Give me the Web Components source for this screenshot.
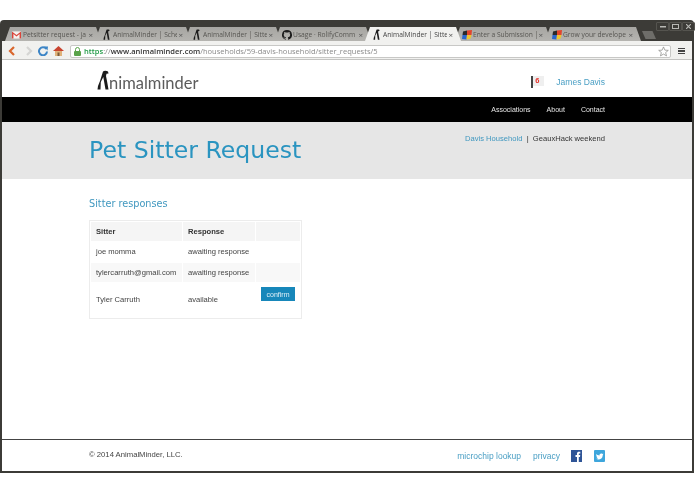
<!DOCTYPE html>
<html>
<head>
<meta charset="utf-8">
<title>AnimalMinder | Sitter request</title>
<style>
  html, body { margin: 0; padding: 0; background: #fff; }
  body { width: 695px; height: 494px; overflow: hidden; font-family: "Liberation Sans", Arial, sans-serif; }
</style>
</head>
<body>
<browser-window>
  <browser-tab slot="tabs" icon="gmail">Petsitter request - ja</browser-tab>
  <browser-tab slot="tabs" icon="am">AnimalMinder | Sche</browser-tab>
  <browser-tab slot="tabs" icon="am">AnimalMinder | Sitte</browser-tab>
  <browser-tab slot="tabs" icon="github">Usage · RolifyComm</browser-tab>
  <browser-tab slot="tabs" icon="am" active>AnimalMinder | Sitte</browser-tab>
  <browser-tab slot="tabs" icon="devpost">Enter a Submission |</browser-tab>
  <browser-tab slot="tabs" icon="devpost">Grow your develope</browser-tab>
  <am-header></am-header>
  <am-nav></am-nav>
  <am-hero></am-hero>
  <am-responses></am-responses>
  <am-footer></am-footer>
</browser-window>

<script>
  const MARK_PATH = 'M6 1.500 C7 .5 9.500 .5 11 1.500 L11.500 3.500 L9.500 3.800 L9 6 L10 11 L11.500 19.500 L8.500 19.500 L7 11 L6.300 7 L3.800 12 L3.500 19.500 L.5 19.500 L1 16 L3 11 Z';
  const MARK = `<svg viewBox="0 0 12 20" width="100%" height="100%"><path d="${MARK_PATH}" fill="#1c1c1c"/></svg>`;

  const TAB_ICONS = {
    gmail: `<svg width="9" height="8" viewBox="0 0 10 8"><rect width="10" height="8" fill="#f5f2ee"/><path d="M0 0 L5 4 L10 0 V8 H8.400 V3 L5 5.600 L1.600 3 V8 H0 Z" fill="#d9443a"/></svg>`,
    am: `<svg width="7" height="11" viewBox="0 0 12 20"><path d="${MARK_PATH}" fill="#1c1c1c"/></svg>`,
    github: `<svg width="10" height="10" viewBox="0 0 16 16"><path d="M8 0a8 8 0 0 0-2.500 15.600c.4.100.5-.2.5-.4v-1.400c-2.200.5-2.700-1-2.700-1-.4-.9-.9-1.200-.9-1.200-.7-.5 0-.5 0-.5.8.100 1.200.8 1.200.8.700 1.200 1.900.9 2.300.7.100-.5.300-.9.500-1.100-1.800-.2-3.600-.9-3.600-4 0-.9.300-1.600.800-2.100-.100-.2-.4-1 .100-2.100 0 0 .7-.2 2.200.8a7.600 7.600 0 0 1 4 0c1.500-1 2.200-.8 2.200-.8.400 1.100.200 1.900.100 2.100.5.500.8 1.200.8 2.100 0 3.100-1.900 3.800-3.700 4 .3.300.6.800.6 1.500v2.200c0 .2.100.5.600.4A8 8 0 0 0 8 0z" fill="#1c1c1c"/></svg>`,
    devpost: `<svg width="10" height="10" viewBox="0 0 10 10"><path d="M5 .5 L10 0 L9.500 5 L5 5 Z" fill="#e2452d"/><path d="M1 1.500 L5 .5 L5 5 L.5 5 Z" fill="#2a2a2a"/><path d="M.5 5 L5 5 L4.500 9.500 L0 9 Z" fill="#2a66cc"/><path d="M5 5 L9.500 5 L8.500 8.500 L4.500 9.500 Z" fill="#f0c52c"/></svg>`
  };

  class BrowserTab extends HTMLElement {
    constructor() {
      super();
      this.attachShadow({ mode: 'open' });
      const icon = TAB_ICONS[this.getAttribute('icon')] || '';
      this.shadowRoot.innerHTML = `
        <style>
          :host {
            display: flex;
            align-items: center;
            box-sizing: border-box;
            width: 96px;
            height: 14px;
            margin-right: -6px;
            padding: 1px 8px 0 6px;
            background: linear-gradient(#a7a6a2, #b5b4b0);
            clip-path: polygon(0 100%, 5px 0, calc(100% - 5px) 0, 100% 100%);
            color: #565551;
            font: 6.700px "Open Sans", sans-serif;
          }
          :host([active]) {
            background: #f1f1ef;
            color: #444;
            z-index: 2;
          }
          .icon { flex: none; display: flex; width: 11px; justify-content: center; margin-right: 1px; }
          .title { flex: 1; min-width: 0; overflow: hidden; white-space: nowrap; }
          .x { flex: none; font-size: 8px; line-height: 10px; margin-left: 1px; color: #555; }
        </style>
        <span class="icon">${icon}</span>
        <span class="title"><slot></slot></span>
        <span class="x">×</span>
      `;
    }
  }

  class BrowserWindow extends HTMLElement {
    constructor() {
      super();
      this.attachShadow({ mode: 'open' });
      this.shadowRoot.innerHTML = `
        <style>
          :host { display: block; width: 694px; padding-top: 20px; filter: blur(.3px); }
          .frame {
            height: 453px;
            box-sizing: border-box;
            display: flex;
            flex-direction: column;
            background: #3c3b37;
            border-radius: 4px 4px 0 0;
            padding: 0 2px 2px 2px;
          }
          .strip { height: 21px; display: flex; align-items: flex-end; justify-content: space-between; padding-left: 3px; flex: none; }
          .tabs { display: flex; align-items: flex-end; }
          .newtab { width: 14px; height: 8px; margin: 0 0 2px 7px; background: #6e6d69; clip-path: polygon(0 0, 75% 0, 100% 100%, 25% 100%); }
          .controls { align-self: flex-start; display: flex; margin-top: 2px; }
          .controls span { width: 11px; height: 7px; border: 1px solid #55544f; border-radius: 1px; display: flex; align-items: center; justify-content: center; }
          .toolbar {
            flex: none;
            height: 19px;
            box-sizing: border-box;
            display: flex;
            align-items: center;
            background: #f1f1ef;
            padding: 2px 7px 0 6px;
            border-bottom: 1px solid #c4c4c2;
          }
          .nav { display: flex; align-items: center; margin-right: 6px; }
          .nav svg { display: block; margin-right: 7px; }
          .nav svg:last-child { margin-right: 0; }
          .omni {
            flex: 1;
            height: 13px;
            box-sizing: border-box;
            display: flex;
            align-items: center;
            background: #fff;
            border: 1px solid #c8c8c6;
            border-radius: 2px;
            font: 7.550px "Open Sans", sans-serif;
            color: #8a8a8a;
            padding: 0 1px 0 3px;
            white-space: nowrap;
          }
          .omni b { font-weight: 600; color: #333; }
          .omni i { font-style: normal; font-weight: 600; color: #1f9a45; }
          .lock { margin-right: 3px; display: flex; }
          .url { flex: 1; }
          .menu { margin-left: 7px; display: flex; flex-direction: column; gap: 1px; width: 7px; }
          .menu span { height: 1.500px; background: #444; }
          .page { flex: 1; min-height: 0; background: #fff; display: flex; flex-direction: column; }
        </style>
        <div class="frame">
          <div class="strip">
            <div class="tabs"><slot name="tabs"></slot><div class="newtab"></div></div>
            <div class="controls">
              <span><svg width="6" height="2"><rect width="6" height="1.500" fill="#b8b8b4"/></svg></span>
              <span><svg width="7" height="5"><rect x=".5" y=".5" width="6" height="4" fill="none" stroke="#b8b8b4"/></svg></span>
              <span><svg width="5" height="5"><path d="M0 0 L5 5 M5 0 L0 5" stroke="#b8b8b4" stroke-width="1.200"/></svg></span>
            </div>
          </div>
          <div class="toolbar">
            <div class="nav">
              <svg width="8" height="10" viewBox="0 0 8 10"><path d="M6 1 L2 5 L6 9" fill="none" stroke="#d9662c" stroke-width="2.200"/></svg>
              <svg width="8" height="10" viewBox="0 0 8 10" style="margin-right:5px;margin-left:2px"><path d="M2 1 L6 5 L2 9" fill="none" stroke="#d5d5d3" stroke-width="2.200"/></svg>
              <svg width="10" height="10" viewBox="0 0 10 10" style="margin-right:5px"><path d="M8.300 3 A4 4 0 1 0 9 5.500" fill="none" stroke="#3d85c6" stroke-width="2"/><path d="M6 .5 L10 .5 L9.500 4.500 Z" fill="#3d85c6"/></svg>
              <svg width="11" height="10" viewBox="0 0 11 10"><path d="M5.500 0 L11 5 H0 Z" fill="#c9442f"/><rect x="2" y="5" width="7" height="5" fill="#e0b27a"/><rect x="4.500" y="6.500" width="2" height="3.500" fill="#7a5a3a"/></svg>
            </div>
            <div class="omni">
              <span class="lock"><svg width="7" height="9" viewBox="0 0 7 9"><path d="M1.500 4 V2.500 A2 2 0 0 1 5.500 2.500 V4" fill="none" stroke="#5aa34a"/><rect y="4" width="7" height="5" rx="1" fill="#5aa34a"/></svg></span>
              <span class="url"><i>https</i>://<b>www.animalminder.com</b>/households/59-davis-household/sitter_requests/5</span>
              <svg width="11" height="11" viewBox="0 0 24 24"><path d="M12 2 L15 9 L22.500 9.500 L16.700 14.300 L18.600 21.600 L12 17.600 L5.400 21.600 L7.300 14.300 L1.500 9.500 L9 9 Z" fill="#fff" stroke="#8a8a88" stroke-width="1.600"/></svg>
            </div>
            <div class="menu"><span></span><span></span><span></span></div>
          </div>
          <div class="page"><slot></slot></div>
        </div>
      `;
    }
  }

  class AmHeader extends HTMLElement {
    constructor() {
      super();
      this.attachShadow({ mode: 'open' });
      this.shadowRoot.innerHTML = `
        <style>
          :host { display: flex; flex: none; height: 37px; box-sizing: border-box; align-items: center; justify-content: space-between; padding: 2px 87px 0 95px; background: #fff; color: #444; }
          .logo { display: flex; align-items: flex-end; height: 20px; }
          .mark { width: 12px; height: 20px; }
          .word { font: 400 16.500px Lato, sans-serif; color: #5c5c5c; line-height: 17px; margin-bottom: -2px; }
          .user { display: flex; align-items: center; margin-top: 4px; }
          .flag { width: 13px; height: 12px; display: flex; margin-right: 12px; }
          .flag i { width: 2px; background: #444; }
          .flag b { font: 700 7.500px "Liberation Sans", sans-serif; color: #e4322b; background: #efefef; padding: 0 4px 0 2px; height: 10px; line-height: 10px; }
          a { color: #4a9fc4; text-decoration: none; font-size: 8.500px; }
        </style>
        <div class="logo"><span class="mark">${MARK}</span><span class="word">nimalminder</span></div>
        <div class="user"><span class="flag"><i></i><b>6</b></span><a>James Davis</a></div>
      `;
    }
  }

  class AmNav extends HTMLElement {
    constructor() {
      super();
      this.attachShadow({ mode: 'open' });
      this.shadowRoot.innerHTML = `
        <style>
          :host { display: flex; flex: none; height: 25px; box-sizing: border-box; justify-content: flex-end; align-items: center; gap: 16px; padding-right: 87px; background: #000; color: #e6e6e6; font-size: 7px; }
        </style>
        <span>Associations</span><span>About</span><span>Contact</span>
      `;
    }
  }

  class AmHero extends HTMLElement {
    constructor() {
      super();
      this.attachShadow({ mode: 'open' });
      this.shadowRoot.innerHTML = `
        <style>
          :host { display: flex; flex: none; height: 57px; box-sizing: border-box; justify-content: space-between; padding: 0 87px; background: #e6e6e6; }
          h1 { margin: 12px 0 0; font: 400 23.600px "DejaVu Sans", sans-serif; color: #2a94c0; line-height: 32px; }
          .crumbs { margin-top: 11px; font-size: 7.600px; color: #333; line-height: 11px; }
          a { color: #3f97bf; }
        </style>
        <h1>Pet Sitter Request</h1>
        <div class="crumbs"><a>Davis Household</a>&nbsp; | &nbsp;GeauxHack weekend</div>
      `;
    }
  }

  class AmResponses extends HTMLElement {
    constructor() {
      super();
      this.attachShadow({ mode: 'open' });
      this.shadowRoot.innerHTML = `
        <style>
          :host { display: block; flex: 1; padding: 18px 0 0 87px; }
          h2 { margin: 0 0 10px; font: 400 9.700px "DejaVu Sans", sans-serif; color: #3f97bf; line-height: 13px; }
          table { width: 213px; border: 1px solid #ececec; border-spacing: 1px; font-size: 7.600px; line-height: 10px; color: #444; table-layout: fixed; }
          th, td { padding: 0 0 0 5px; text-align: left; white-space: nowrap; }
          th { background: #f5f5f5; color: #333; height: 19px; }
          td { height: 20px; }
          tr.odd td { background: #f8f8f8; height: 19px; }
          tr.tall td { height: 34px; }
          button { display: block; margin: -12px 0 0 0; width: 34px; height: 14px; padding: 0; border: 0; background: #1787ba; color: #dff0f7; font: 7px "Liberation Sans", sans-serif; }
        </style>
        <h2>Sitter responses</h2>
        <table>
          <colgroup><col style="width:91px"><col style="width:72px"><col></colgroup>
          <tr><th>Sitter</th><th>Response</th><th></th></tr>
          <tr><td>joe momma</td><td>awaiting response</td><td></td></tr>
          <tr class="odd"><td>tylercarruth@gmail.com</td><td>awaiting response</td><td></td></tr>
          <tr class="tall"><td>Tyler Carruth</td><td>available</td><td><button>confirm</button></td></tr>
        </table>
      `;
    }
  }

  class AmFooter extends HTMLElement {
    constructor() {
      super();
      this.attachShadow({ mode: 'open' });
      this.shadowRoot.innerHTML = `
        <style>
          :host { display: flex; flex: none; height: 32px; box-sizing: border-box; border-top: 1px solid #444; justify-content: space-between; align-items: center; padding: 0 87px; background: #fff; font-size: 7.700px; color: #444; }
          .copy { margin-bottom: 2px; }
          .links { display: flex; align-items: center; font-size: 8.500px; color: #4a9fc4; }
          .links span { margin-right: 12px; }
          .links svg { display: block; margin-left: 11px; }
        </style>
        <div class="copy">© 2014 AnimalMinder, LLC.</div>
        <div class="links">
          <span>microchip lookup</span><span style="margin-right:0">privacy</span>
          <svg width="11" height="12" viewBox="0 0 11 12"><rect width="11" height="12" fill="#2f5597"/><path d="M6 12 V7 H4.500 V5 H6 V3.500 C6 2.300 6.800 1.700 8 1.700 H9.300 V3.500 H8.400 C8 3.500 7.800 3.700 7.800 4 V5 H9.200 L9 7 H7.800 V12 Z" fill="#fff"/></svg>
          <svg width="11" height="12" viewBox="0 0 11 12" style="margin-left:12px"><rect width="11" height="12" rx="1" fill="#3ea6dc"/><path d="M2 4 C3.200 5 4.300 5.400 5.500 5.400 C5.300 3.800 7.300 3 8.300 4 L9.300 3.600 L8.800 4.600 L9.400 4.500 C9 5 8.700 5.200 8.700 5.500 C8.700 8 6.500 9.500 4.500 9.500 C3.500 9.500 2.600 9.200 2 8.800 C2.800 8.800 3.500 8.600 4 8.200 C3.300 8.100 2.800 7.700 2.600 7.100 L3.300 7.100 C2.600 6.800 2.200 6.300 2.200 5.500 L2.800 5.700 C2.200 5.200 2 4.600 2 4 Z" fill="#fff"/></svg>
        </div>
      `;
    }
  }

  customElements.define('browser-tab', BrowserTab);
  customElements.define('browser-window', BrowserWindow);
  customElements.define('am-header', AmHeader);
  customElements.define('am-nav', AmNav);
  customElements.define('am-hero', AmHero);
  customElements.define('am-responses', AmResponses);
  customElements.define('am-footer', AmFooter);
</script>
</body>
</html>
